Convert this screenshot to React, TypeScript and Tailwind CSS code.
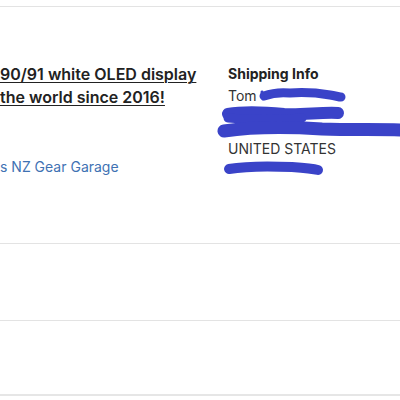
import React from 'react'

const font = { fontFamily: 'Inter, "Noto Sans", sans-serif' }

function Scribbles() {
  // redaction marks drawn over the address lines
  return (
    <svg
      className="pointer-events-none absolute left-0 top-0"
      width="400"
      height="400"
      viewBox="0 0 400 400"
      fill="none"
    >
      <g stroke="#3a43c8" strokeLinecap="round" strokeLinejoin="round">
        <path d="M264 96 C 272 93, 280 92, 290 93 C 304 92, 318 93, 330 95 C 336 96, 339 97, 341 97" strokeWidth="9" />
        <path d="M262 92 L 263 99" strokeWidth="3" />
        <path d="M228 114 C 244 111, 264 112, 284 114 C 302 115, 322 112, 338 113" strokeWidth="12" />
        <path d="M228 118 C 250 120, 278 120, 302 118" strokeWidth="9" />
        <path d="M224 131 C 252 127, 290 127, 322 129 C 352 130, 382 129, 402 130" strokeWidth="13" />
        <path d="M229 169 C 246 166, 270 166, 292 167 C 305 168, 314 169, 318 170" strokeWidth="10" />
      </g>
    </svg>
  )
}

export default function App() {
  return (
    <div className="relative h-[400px] w-[400px] overflow-hidden bg-white" style={font}>
      <div className="mt-[6px] border-t border-[#e3e3e3]">
        <div className="flex h-[237px] border-b border-[#e3e3e3] pt-[56px]">
          <div className="w-[228px] shrink-0">
            <p className="text-[16px] font-semibold leading-[23px] text-[#222] underline decoration-1 underline-offset-2">
              90/91 white OLED display
              <br />
              the world since 2016!
            </p>
            <p className="mt-[47px] text-[14px] leading-[22px] text-[#3f72b3]">s NZ Gear Garage</p>
          </div>
          <div className="text-[14px] text-[#333]">
            <p className="font-bold leading-[22px] text-[#222]">Shipping Info</p>
            <p className="mt-[2px] leading-[17.5px]">Tom</p>
            <p className="leading-[17.5px]">&nbsp;</p>
            <p className="leading-[17.5px]">&nbsp;</p>
            <p className="leading-[17.5px]">UNITED STATES</p>
            <p className="leading-[17.5px]">&nbsp;</p>
          </div>
        </div>
        <div className="h-[77px] border-b border-[#e3e3e3]" />
        <div className="h-[75px] border-b-2 border-[#e6e6e6]" />
      </div>
      <Scribbles />
    </div>
  )
}
